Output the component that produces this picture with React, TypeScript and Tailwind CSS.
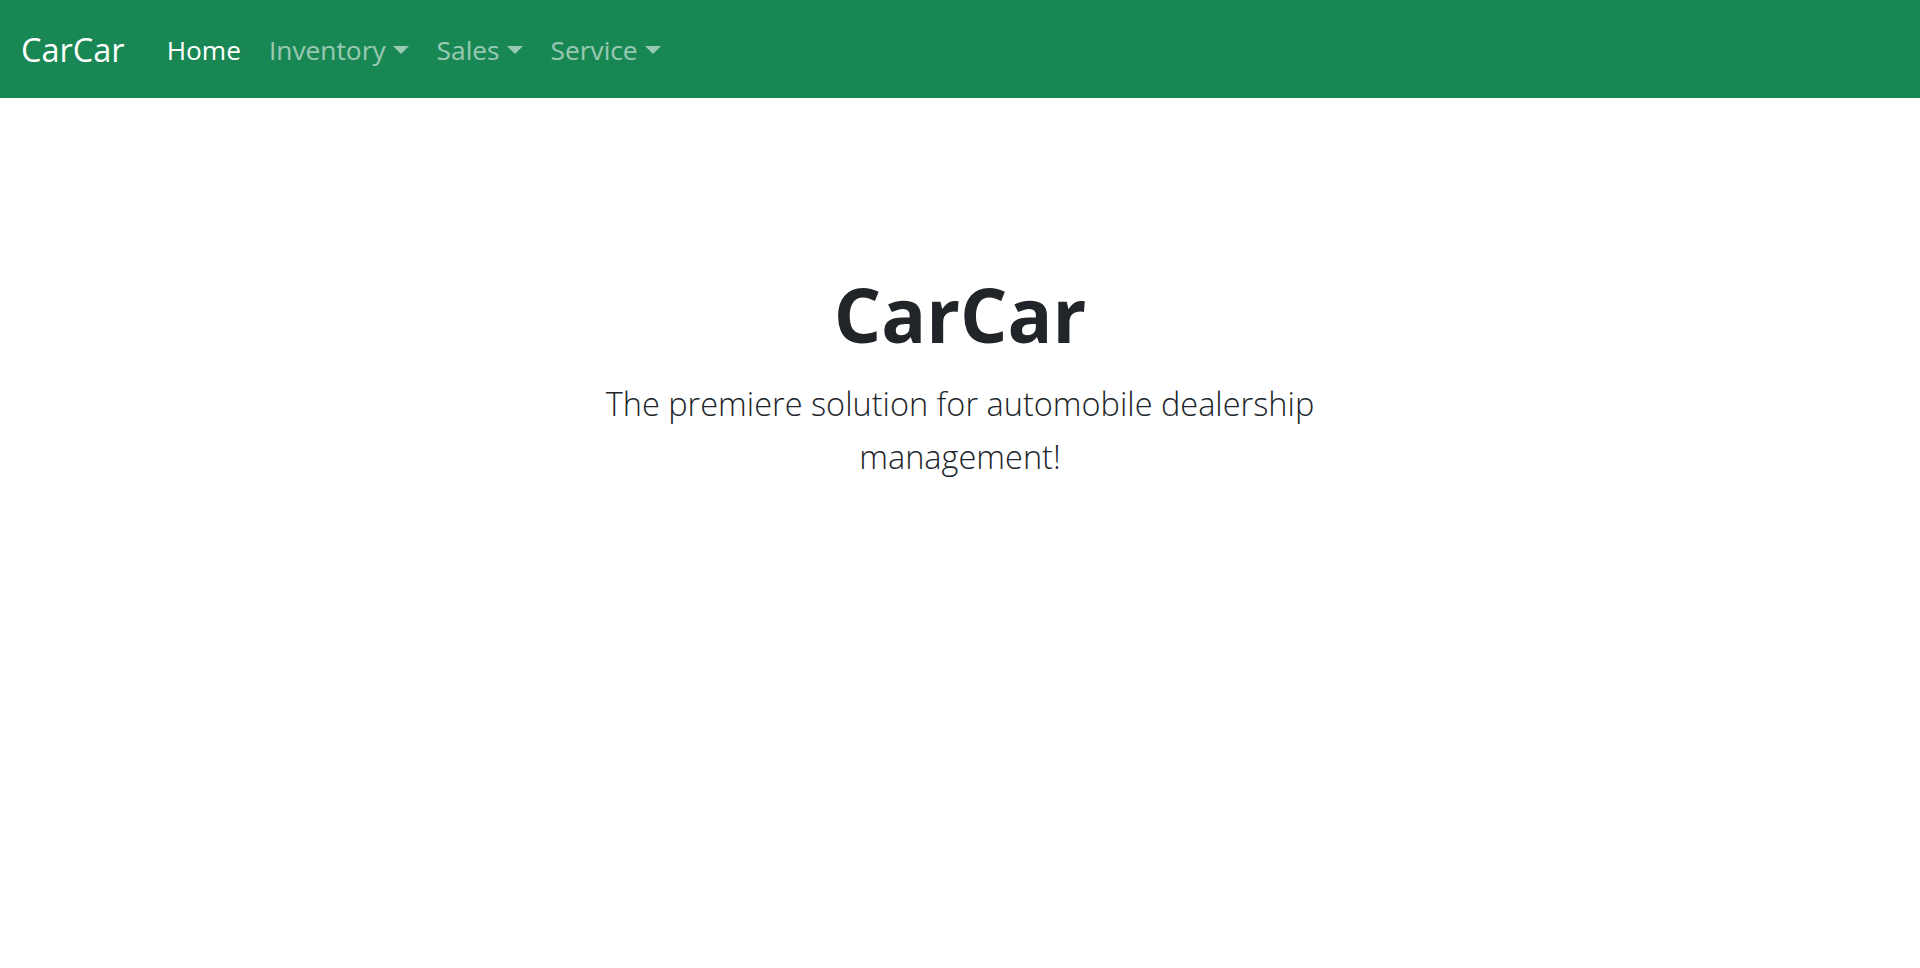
const navItems = [
  { label: "Home", active: true, dropdown: false },
  { label: "Inventory", active: false, dropdown: true },
  { label: "Sales", active: false, dropdown: true },
  { label: "Service", active: false, dropdown: true },
];

function Caret() {
  return (
    <span className="ml-[7px] inline-block border-x-[8px] border-t-[8px] border-x-transparent border-t-current align-middle" />
  );
}

export default function App() {
  return (
    <div className="min-h-[968px] bg-white text-[#212529] font-['Open_Sans',sans-serif]">
      <nav className="flex h-[98px] items-center bg-[#198754] px-[21px] pt-[2px]">
        <a className="mr-[28px] text-[32.5px] leading-none text-white" href="#">
          CarCar
        </a>
        <ul className="flex items-center">
          {navItems.map((item) => (
            <li key={item.label}>
              <a
                href="#"
                className={
                  "flex items-center px-[14px] text-[26.3px] leading-none " +
                  (item.active ? "text-white" : "text-white/55")
                }
              >
                {item.label}
                {item.dropdown && <Caret />}
              </a>
            </li>
          ))}
        </ul>
      </nav>
      <div className="px-[42px] pt-[84px] mt-[84px] text-center">
        <h1 className="text-[74.5px] font-bold leading-[96px] mb-[15px]">CarCar</h1>
        <div className="mx-auto w-[760px]">
          <p className="text-[32.5px] font-light leading-[53px]">
            The premiere solution for automobile dealership management!
          </p>
        </div>
      </div>
    </div>
  );
}
